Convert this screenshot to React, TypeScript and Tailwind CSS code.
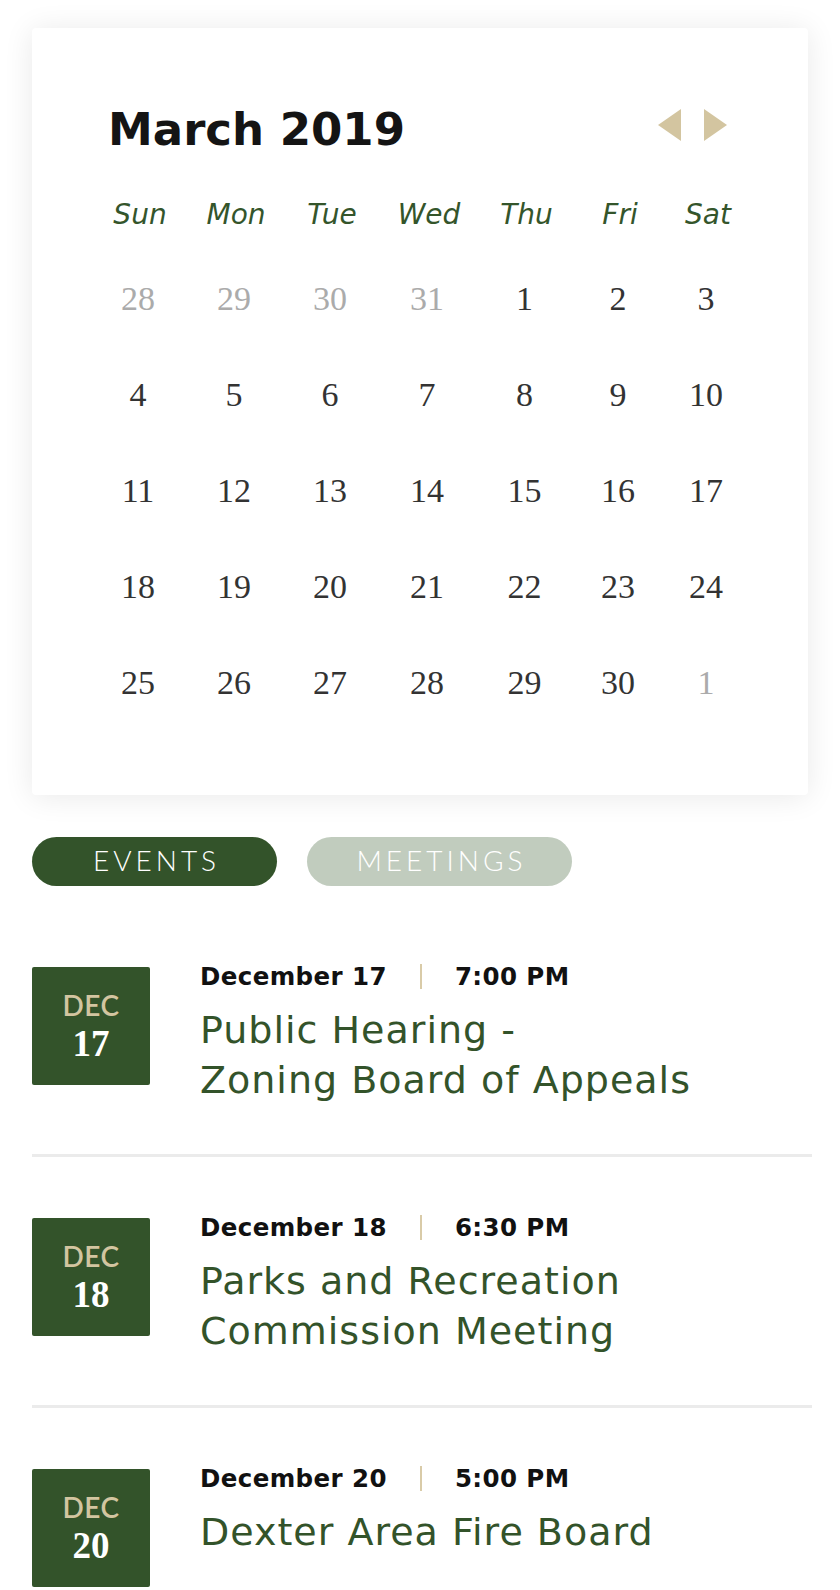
const weeks: { n: number; muted?: boolean }[][] = [
  [{ n: 28, muted: true }, { n: 29, muted: true }, { n: 30, muted: true }, { n: 31, muted: true }, { n: 1 }, { n: 2 }, { n: 3 }],
  [4, 5, 6, 7, 8, 9, 10].map((n) => ({ n })),
  [11, 12, 13, 14, 15, 16, 17].map((n) => ({ n })),
  [18, 19, 20, 21, 22, 23, 24].map((n) => ({ n })),
  [{ n: 25 }, { n: 26 }, { n: 27 }, { n: 28 }, { n: 29 }, { n: 30 }, { n: 1, muted: true }],
];

const days = ["Sun", "Mon", "Tue", "Wed", "Thu", "Fri", "Sat"];

const events = [
  { day: "17", date: "December 17", time: "7:00 PM", title: ["Public Hearing -", "Zoning Board of Appeals"] },
  { day: "18", date: "December 18", time: "6:30 PM", title: ["Parks and Recreation", "Commission Meeting"] },
  { day: "20", date: "December 20", time: "5:00 PM", title: ["Dexter Area Fire Board"] },
];

const sans = "font-['DejaVu_Sans','Liberation_Sans',sans-serif]";
const serif = "font-['Liberation_Serif','DejaVu_Serif',serif]";
const lato = "font-['Lato','Liberation_Sans',sans-serif]";

export default function App() {
  return (
    <div className={`min-h-screen bg-white pl-8 pt-7 ${sans}`}>
      {/* Calendar card */}
      <div className="w-[776px] rounded-sm bg-white px-[58px] pt-[71px] pb-16 shadow-[0_2px_30px_rgba(0,0,0,0.09)]">
        <div className="flex h-[60px] items-center justify-between pl-[18px] pr-[23px]">
          <h2 className="text-[45px] font-bold leading-none text-[#141414]">March 2019</h2>
          <div className="mb-2 flex items-center gap-[23px]">
            <svg width="23" height="32" viewBox="0 0 23 32">
              <polygon points="23,0 23,32 0,16" fill="#d3c5a0" />
            </svg>
            <svg width="23" height="32" viewBox="0 0 23 32">
              <polygon points="0,0 0,32 23,16" fill="#d3c5a0" />
            </svg>
          </div>
        </div>

        <div className="mt-8 grid h-12 grid-cols-[96px_96px_96px_98px_97px_90px_86px] items-center">
          {days.map((d) => (
            <div key={d} className="pl-1 text-center text-[28px] italic leading-none text-[#34552b]">
              {d}
            </div>
          ))}
        </div>

        <div className="mt-3">
          {weeks.map((w, i) => (
            <div key={i} className="grid h-24 grid-cols-[96px_96px_96px_98px_97px_90px_86px] items-center">
              {w.map((c, j) => (
                <div
                  key={j}
                  className={`text-center text-[34px] leading-none ${serif} ${c.muted ? "text-[#ababab]" : "text-[#333333]"}`}
                >
                  {c.n}
                </div>
              ))}
            </div>
          ))}
        </div>
      </div>

      {/* Tabs */}
      <div className={`mt-[42px] flex gap-[30px] ${lato}`}>
        <button className="flex h-[49px] w-[245px] items-center justify-center rounded-full bg-[#33532a] pb-[3px] pl-1 text-[28px] font-light tracking-[4px] text-white">
          EVENTS
        </button>
        <button className="flex h-[49px] w-[265px] items-center justify-center rounded-full bg-[#c1ccbe] pb-[3px] pl-1 text-[28px] font-light tracking-[4px] text-white">
          MEETINGS
        </button>
      </div>

      {/* Event list */}
      <div className="mt-[20px] w-[780px]">
        {events.map((e, i) => (
          <div
            key={i}
            className={`flex gap-[50px] pt-[61px] pb-[49px] ${i < events.length - 1 ? "border-b-[3px] border-[#ebebeb]" : ""}`}
          >
            <div className="flex h-[118px] w-[118px] shrink-0 flex-col items-center justify-center rounded-[2px] bg-[#33532a]">
              <span className={`text-[28px] font-semibold leading-[32px] tracking-[0.5px] text-[#d3c5a0] ${lato}`}>DEC</span>
              <span className={`mt-[3px] text-[37px] font-bold leading-[40px] text-white ${serif}`}>{e.day}</span>
            </div>
            <div className="-mt-[3px]">
              <div className="flex items-center text-[24.5px] font-bold leading-6 tracking-[0.4px] text-[#111111]">
                <span>{e.date}</span>
                <span className="mx-[33px] h-[25px] w-[2px] bg-[#d9cba8]" />
                <span>{e.time}</span>
              </div>
              <div className="mt-[16px] text-[38px] leading-[50px] tracking-[1px] text-[#33532a]">
                {e.title.map((t) => (
                  <div key={t}>{t}</div>
                ))}
              </div>
            </div>
          </div>
        ))}
      </div>
    </div>
  );
}
